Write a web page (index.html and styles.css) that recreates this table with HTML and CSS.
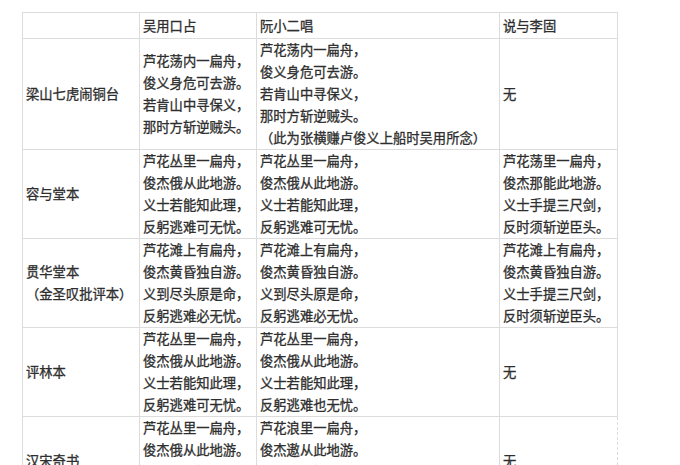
FILE: index.html
```html
<!DOCTYPE html>
<html lang="zh-CN">
<head>
<meta charset="utf-8">
<link rel="stylesheet" href="styles.css">
</head>
<body>
<table class="poems">
  <colgroup>
    <col class="c-edition">
    <col class="c-wu">
    <col class="c-ruan">
    <col class="c-li">
  </colgroup>
  <tr class="head">
    <td></td>
    <td>吴用口占</td>
    <td>阮小二唱</td>
    <td>说与李固</td>
  </tr>
  <tr class="r5">
    <td>梁山七虎闹铜台</td>
    <td>芦花荡内一扁舟，<br>俊义身危可去游。<br>若肯山中寻保义，<br>那时方斩逆贼头。</td>
    <td>芦花荡内一扁舟，<br>俊义身危可去游。<br>若肯山中寻保义，<br>那时方斩逆贼头。<br>（此为张横赚卢俊义上船时吴用所念）</td>
    <td>无</td>
  </tr>
  <tr>
    <td>容与堂本</td>
    <td>芦花丛里一扁舟，<br>俊杰俄从此地游。<br>义士若能知此理，<br>反躬逃难可无忧。</td>
    <td>芦花丛里一扁舟，<br>俊杰俄从此地游。<br>义士若能知此理，<br>反躬逃难可无忧。</td>
    <td>芦花荡里一扁舟，<br>俊杰那能此地游。<br>义士手提三尺剑，<br>反时须斩逆臣头。</td>
  </tr>
  <tr>
    <td>贯华堂本<br>（金圣叹批评本）</td>
    <td>芦花滩上有扁舟，<br>俊杰黄昏独自游。<br>义到尽头原是命，<br>反躬逃难必无忧。</td>
    <td>芦花滩上有扁舟，<br>俊杰黄昏独自游。<br>义到尽头原是命，<br>反躬逃难必无忧。</td>
    <td>芦花滩上有扁舟，<br>俊杰黄昏独自游。<br>义士手提三尺剑，<br>反时须斩逆臣头。</td>
  </tr>
  <tr>
    <td>评林本</td>
    <td>芦花丛里一扁舟，<br>俊杰俄从此地游。<br>义士若能知此理，<br>反躬逃难可无忧。</td>
    <td>芦花丛里一扁舟，<br>俊杰俄从此地游。<br>义士若能知此理，<br>反躬逃难也无忧。</td>
    <td>无</td>
  </tr>
  <tr class="last">
    <td>汉宋奇书</td>
    <td>芦花丛里一扁舟，<br>俊杰俄从此地游。<br>义士若能知此理，<br>反躬逃难可无忧。</td>
    <td>芦花浪里一扁舟，<br>俊杰遨从此地游。<br>义士若能知此理，<br>反躬逃难可无忧。</td>
    <td>无</td>
  </tr>
</table>
</body>
</html>
```

FILE: styles.css
```css
html, body {
  margin: 0;
  background: #ffffff;
}
body {
  padding: 12px 0 0 22px;
  font-family: "Noto Sans CJK SC", "Noto Sans", sans-serif;
  font-size: 13.3px;
  color: #2e2e2e;
  -webkit-text-stroke: 0.3px #2e2e2e;
  overflow: hidden;
  height: 465px;
  box-sizing: border-box;
}
.poems {
  border-collapse: collapse;
  table-layout: fixed;
  width: 595px;
}
.c-edition { width: 117px; }
.c-wu { width: 117px; }
.c-ruan { width: 243px; }
.c-li { width: 118px; }
.poems td {
  border: 1px solid #dcdcdc;
  padding: 0 2px 0 3px;
  line-height: 22px;
  vertical-align: middle;
  white-space: nowrap;
  overflow: hidden;
  height: 88px;
}
.poems tr.head td { height: 25px; }
.poems tr.r5 td { height: 109px; }
.last td:last-child {
  border-left-style: dashed;
  border-right-style: dashed;
}
```
